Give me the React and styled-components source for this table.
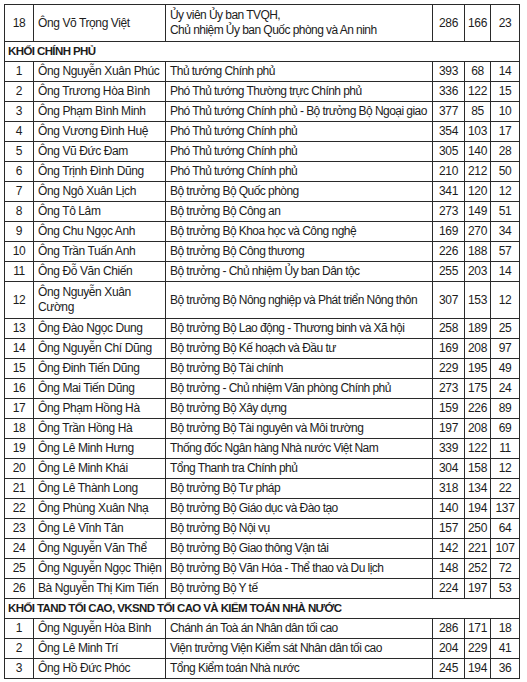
import React from "react";
import styled, { createGlobalStyle } from "styled-components";

const GlobalStyle = createGlobalStyle`
  html, body {
    margin: 0;
    padding: 0;
    background: #ffffff;
  }
  body {
    font-family: "Liberation Sans", Arial, sans-serif;
  }
`;

const sections = [
  {
    rows: [
      {
        no: 18,
        name: "Ông Võ Trọng Việt",
        role: ["Ủy viên Ủy ban TVQH,", "Chủ nhiệm Ủy ban Quốc phòng và An ninh"],
        a: 286,
        b: 166,
        c: 23,
        tall: true,
      },
    ],
  },
  {
    title: "KHỐI CHÍNH PHỦ",
    rows: [
      { no: 1, name: "Ông Nguyễn Xuân Phúc", role: "Thủ tướng Chính phủ", a: 393, b: 68, c: 14 },
      { no: 2, name: "Ông Trương Hòa Bình", role: "Phó Thủ tướng Thường trực Chính phủ", a: 336, b: 122, c: 15 },
      { no: 3, name: "Ông Phạm Bình Minh", role: "Phó Thủ tướng Chính phủ - Bộ trưởng Bộ Ngoại giao", a: 377, b: 85, c: 10 },
      { no: 4, name: "Ông Vương Đình Huệ", role: "Phó Thủ tướng Chính phủ", a: 354, b: 103, c: 17, soft: true },
      { no: 5, name: "Ông Vũ Đức Đam", role: "Phó Thủ tướng Chính phủ", a: 305, b: 140, c: 28 },
      { no: 6, name: "Ông Trịnh Đình Dũng", role: "Phó Thủ tướng Chính phủ", a: 210, b: 212, c: 50 },
      { no: 7, name: "Ông Ngô Xuân Lịch", role: "Bộ trưởng Bộ Quốc phòng", a: 341, b: 120, c: 12 },
      { no: 8, name: "Ông Tô Lâm", role: "Bộ trưởng Bộ Công an", a: 273, b: 149, c: 51, soft: true },
      { no: 9, name: "Ông Chu Ngọc Anh", role: "Bộ trưởng Bộ Khoa học và Công nghệ", a: 169, b: 270, c: 34 },
      { no: 10, name: "Ông Trần Tuấn Anh", role: "Bộ trưởng Bộ Công thương", a: 226, b: 188, c: 57 },
      { no: 11, name: "Ông Đỗ Văn Chiến", role: "Bộ trưởng - Chủ nhiệm Ủy ban Dân tộc", a: 255, b: 203, c: 14 },
      { no: 12, name: ["Ông Nguyễn Xuân", "Cường"], role: "Bộ trưởng Bộ Nông nghiệp và Phát triển Nông thôn", a: 307, b: 153, c: 12, tall: true },
      { no: 13, name: "Ông Đào Ngọc Dung", role: "Bộ trưởng Bộ Lao động - Thương binh và Xã hội", a: 258, b: 189, c: 25 },
      { no: 14, name: "Ông Nguyễn Chí Dũng", role: "Bộ trưởng Bộ Kế hoạch và Đầu tư", a: 169, b: 208, c: 97 },
      { no: 15, name: "Ông Đinh Tiến Dũng", role: "Bộ trưởng Bộ Tài chính", a: 229, b: 195, c: 49 },
      { no: 16, name: "Ông Mai Tiến Dũng", role: "Bộ trưởng - Chủ nhiệm Văn phòng Chính phủ", a: 273, b: 175, c: 24, soft: true },
      { no: 17, name: "Ông Phạm Hồng Hà", role: "Bộ trưởng Bộ Xây dựng", a: 159, b: 226, c: 89 },
      { no: 18, name: "Ông Trần Hồng Hà", role: "Bộ trưởng Bộ Tài nguyên và Môi trường", a: 197, b: 208, c: 69 },
      { no: 19, name: "Ông Lê Minh Hưng", role: "Thống đốc Ngân hàng Nhà nước Việt Nam", a: 339, b: 122, c: 11 },
      { no: 20, name: "Ông Lê Minh Khái", role: "Tổng Thanh tra Chính phủ", a: 304, b: 158, c: 12 },
      { no: 21, name: "Ông Lê Thành Long", role: "Bộ trưởng Bộ Tư pháp", a: 318, b: 134, c: 22, soft: true },
      { no: 22, name: "Ông Phùng Xuân Nhạ", role: "Bộ trưởng Bộ Giáo dục và Đào tạo", a: 140, b: 194, c: 137 },
      { no: 23, name: "Ông Lê Vĩnh Tân", role: "Bộ trưởng Bộ Nội vụ", a: 157, b: 250, c: 64 },
      { no: 24, name: "Ông Nguyễn Văn Thể", role: "Bộ trưởng Bộ Giao thông Vận tải", a: 142, b: 221, c: 107 },
      { no: 25, name: "Ông Nguyễn Ngọc Thiện", role: "Bộ trưởng Bộ Văn Hóa - Thể thao và Du lịch", a: 148, b: 252, c: 72 },
      { no: 26, name: "Bà Nguyễn Thị Kim Tiến", role: "Bộ trưởng Bộ Y tế", a: 224, b: 197, c: 53, soft: true },
    ],
  },
  {
    title: "KHỐI TAND TỐI CAO, VKSND TỐI CAO VÀ KIỂM TOÁN NHÀ NƯỚC",
    rows: [
      { no: 1, name: "Ông Nguyễn Hòa Bình", role: "Chánh án Toà án Nhân dân tối cao", a: 286, b: 171, c: 18 },
      { no: 2, name: "Ông Lê Minh Trí", role: "Viện trưởng Viện Kiểm sát Nhân dân tối cao", a: 204, b: 229, c: 41 },
      { no: 3, name: "Ông Hồ Đức Phóc", role: "Tổng Kiểm toán Nhà nước", a: 245, b: 194, c: 36 },
    ],
  },
];

const Page = styled.div`
  padding: 4px 0 0 4px;
`;

const Table = styled.table`
  width: 515px;
  border-collapse: collapse;
  table-layout: fixed;
  font-size: 12px;
  letter-spacing: -0.4px;
  color: #1c1c1c;
`;

const Row = styled.tr`
  height: ${(p) => (p.$tall ? "37px" : "20px")};
  td {
    border-top: 1px solid ${(p) => (p.$soft ? "#7a7a7a" : "#2a2a2a")};
  }
`;

const Cell = styled.td`
  border: 1px solid #2a2a2a;
  padding: 0 ${(p) => (p.$align === "center" ? "0" : "4px")};
  line-height: 15px;
  letter-spacing: ${(p) => (p.$tight ? "-0.55px" : "inherit")};
  text-align: ${(p) => p.$align || "left"};
  vertical-align: middle;
  white-space: nowrap;
  overflow: hidden;
`;

const HeadCell = styled.td`
  border: 1px solid #2a2a2a;
  padding: 0 3px;
  font-size: 11.5px;
  font-weight: bold;
  letter-spacing: -0.6px;
  line-height: 15px;
  white-space: nowrap;
`;

const Line = styled.div`
  display: block;
`;

function Lines({ value }) {
  if (Array.isArray(value)) return value.map((v) => <Line key={v}>{v}</Line>);
  return value;
}

export default function App() {
  return (
    <Page>
      <GlobalStyle />
      <Table>
        <colgroup>
          <col style={{ width: 29 }} />
          <col style={{ width: 132 }} />
          <col style={{ width: 267 }} />
          <col style={{ width: 32 }} />
          <col style={{ width: 26 }} />
          <col style={{ width: 29 }} />
        </colgroup>
        <tbody>
          {sections.map((section, si) => (
            <React.Fragment key={si}>
              {section.title && (
                <Row>
                  <HeadCell colSpan={6}>{section.title}</HeadCell>
                </Row>
              )}
              {section.rows.map((r, ri) => (
                <Row key={ri} $tall={r.tall} $soft={r.soft}>
                  <Cell $align="center">{r.no}</Cell>
                  <Cell>
                    <Lines value={r.name} />
                  </Cell>
                  <Cell $tight>
                    <Lines value={r.role} />
                  </Cell>
                  <Cell $align="center">{r.a}</Cell>
                  <Cell $align="center">{r.b}</Cell>
                  <Cell $align="center">{r.c}</Cell>
                </Row>
              ))}
            </React.Fragment>
          ))}
        </tbody>
      </Table>
    </Page>
  );
}
